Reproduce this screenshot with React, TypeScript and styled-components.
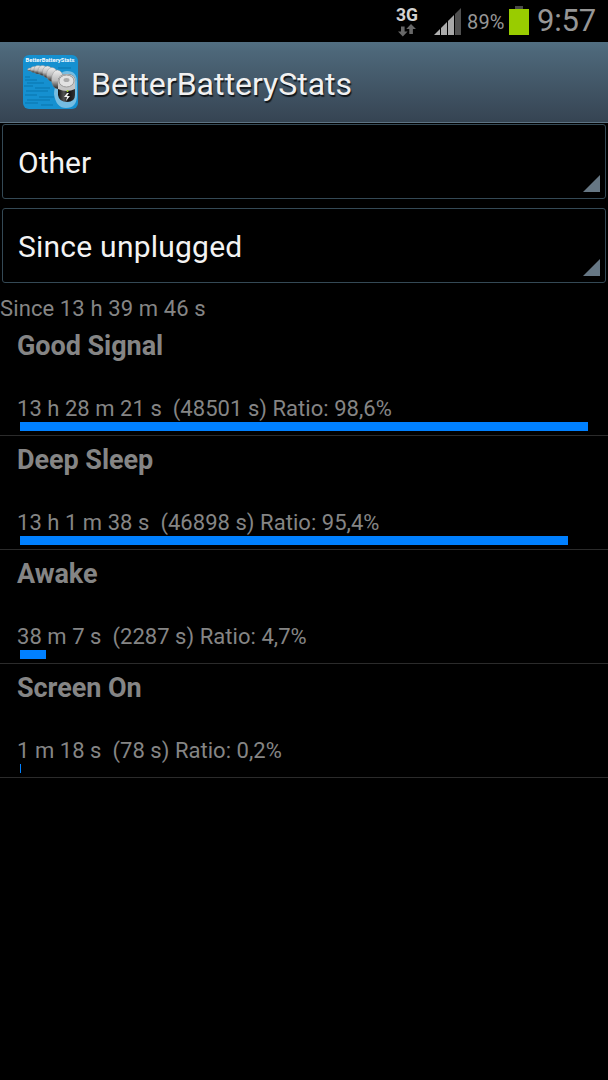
import React from 'react';
import styled, { createGlobalStyle } from 'styled-components';

const GlobalStyle = createGlobalStyle`
  * { box-sizing: border-box; }
  body { margin: 0; background: #000; font-family: Roboto, "Liberation Sans", sans-serif; }
`;

const Screen = styled.main`
  display: flex;
  flex-direction: column;
  width: 608px;
  height: 1080px;
  background: #000;
  overflow: hidden;
`;

const StatusBar = styled.header`
  display: flex;
  align-items: flex-start;
  justify-content: flex-end;
  height: 42px;
  padding-right: 13px;
  color: #969696;
`;

const Network = styled.div`
  display: flex;
  flex-direction: column;
  align-items: center;
  width: 24px;
  margin: 6px 15px 0 0;
`;

const NetworkType = styled.span`
  font-size: 17.5px;
  line-height: 18px;
  font-weight: 700;
  color: #d2d2d2;
`;

const StatusIcon = styled.svg`
  display: block;
  flex: none;
`;

const BatteryPercent = styled.span`
  width: 47px;
  padding-left: 5px;
  font-size: 20px;
  line-height: 44px;
  letter-spacing: 0.15px;
  white-space: nowrap;
`;

const Clock = styled.span`
  width: 58px;
  margin-left: 8px;
  font-size: 31px;
  line-height: 42px;
  letter-spacing: -0.2px;
  white-space: nowrap;
`;

const ActionBar = styled.div`
  display: flex;
  align-items: center;
  height: 81px;
  padding-left: 23px;
  background: linear-gradient(#526f82 0, #4d6779 12%, #384756 92%, #354452 100%);
  border-bottom: 1px solid #5d7383;
`;

const Title = styled.h1`
  margin: 0 0 0 13px;
  padding-top: 3px;
  font-size: 32px;
  font-weight: 400;
  line-height: 42px;
  color: #f1f1f1;
  text-shadow: 1px 2px 1px rgba(0, 0, 0, 0.75);
`;

const Filters = styled.div`
  display: flex;
  flex-direction: column;
  gap: 9px;
  padding: 1px 2px 0;
`;

const Spinner = styled.div`
  display: flex;
  align-items: center;
  justify-content: space-between;
  height: 75px;
  padding: 2px 5px 0 15px;
  border: 1px solid #344955;
  border-radius: 3px;
  font-size: 30px;
  color: #f3f3f3;
`;

const SpinnerLabel = styled.span<{ $tracking: number }>`
  letter-spacing: ${(p) => p.$tracking}px;
`;

const SpinnerArrow = styled.svg`
  align-self: flex-end;
  margin-bottom: 6px;
`;

const Period = styled.p`
  margin: 13px 0 0;
  font-size: 22px;
  line-height: 26px;
  letter-spacing: 0.11px;
  color: #858585;
`;

const Row = styled.section`
  height: 114px;
  padding: 6px 20px 0 17px;
  border-bottom: 1px solid #2b2b2b;
  color: #858585;
`;

const RowTitle = styled.h2`
  margin: 0;
  font-size: 27px;
  font-weight: 700;
  line-height: 36px;
  letter-spacing: -0.05px;
`;

const RowDetail = styled.p`
  margin: 32px 0 0;
  font-size: 22px;
  line-height: 26px;
  letter-spacing: 0.04px;
  white-space: pre;
`;

const Track = styled.div`
  width: 576px;
  height: 9px;
  margin-left: 3px;
`;

const Bar = styled.div`
  height: 100%;
  background: #0080ff;
`;

const stats = [
  { name: 'Good Signal', detail: '13 h 28 m 21 s  (48501 s) Ratio: 98,6%', ratio: 98.6 },
  { name: 'Deep Sleep', detail: '13 h 1 m 38 s  (46898 s) Ratio: 95,4%', ratio: 95.2 },
  { name: 'Awake', detail: '38 m 7 s  (2287 s) Ratio: 4,7%', ratio: 4.6 },
  { name: 'Screen On', detail: '1 m 18 s  (78 s) Ratio: 0,2%', ratio: 0.16 },
];

function DataArrows() {
  return (
    <StatusIcon width="18" height="13" viewBox="0 0 18 13">
      <path d="M3 2.5h3.6v5h3L4.8 12.4 0 7.5h3z" fill="#686868" />
      <path d="M13 0 18 4.9h-3.1v5h-3.6v-5h-3z" fill="#686868" />
    </StatusIcon>
  );
}

function Signal() {
  return (
    <StatusIcon width="28" height="36" viewBox="0 0 28 36">
      <path d="M0 35 6 29v6z" fill="#b0b0b0" />
      <path d="M7 28l6-6v13H7z" fill="#aaa" />
      <path d="M14 21l6-6v20h-6z" fill="#a8a8a8" />
      <path d="M21 14l6-6v27h-6z" fill="#505050" />
    </StatusIcon>
  );
}

function Battery() {
  return (
    <StatusIcon width="20" height="36" viewBox="0 0 20 36">
      <rect x="6" y="6" width="8" height="4" fill="#484848" />
      <rect y="9" width="20" height="26" fill="#99cc00" />
    </StatusIcon>
  );
}

function AppIcon() {
  return (
    <svg width="55" height="54" viewBox="0 0 55 54" overflow="visible">
      <defs>
        <linearGradient id="metal" x1="0" y1="0" x2="0" y2="1">
          <stop offset="0" stopColor="#eee" />
          <stop offset="0.55" stopColor="#bbb" />
          <stop offset="1" stopColor="#222" />
        </linearGradient>
        <linearGradient id="cell" x1="0" y1="0" x2="1" y2="0">
          <stop offset="0" stopColor="#111" />
          <stop offset="0.35" stopColor="#555" />
          <stop offset="0.6" stopColor="#111" />
          <stop offset="1" stopColor="#333" />
        </linearGradient>
      </defs>
      <rect width="55" height="54" rx="6" fill="#1590d0" />
      <path d="M2 25h12M4 28h17M1 31h9M12 33h15M3 36h22M2 40h12M16 42h15M4 45h23M2 48h13M18 50h12M2 22h5M35 13h13" stroke="#0874ad" strokeWidth="1" />
      <path d="M31 39q0-6 3-10 2-13 10-13 10 0 10 11v13q0 13-11 13-10 0-12-14z" fill="#75bde2" />
      <g fill="url(#metal)" stroke="#888" strokeWidth=".4">
        <ellipse cx="7" cy="14.5" rx="2.5" ry="1.5" />
        <ellipse cx="11" cy="14.5" rx="3.5" ry="3" />
        <ellipse cx="15" cy="14.8" rx="4" ry="4.2" />
        <ellipse cx="19.5" cy="15.5" rx="4.5" ry="5" />
        <ellipse cx="24.5" cy="17" rx="5" ry="6" />
        <ellipse cx="29" cy="19.5" rx="5.5" ry="7" />
        <ellipse cx="34.5" cy="24.5" rx="6" ry="9.5" />
      </g>
      <path d="M35 27q0-8 9-8t8 8v13q0 7-8 7t-9-7z" fill="url(#cell)" />
      <path d="M35 27q0-8 9-8t8 8v7q-8 4-17 0z" fill="#c5c5c5" />
      <ellipse cx="43.5" cy="26" rx="7.5" ry="6" fill="#e2e2e2" stroke="#999" strokeWidth="1" />
      <ellipse cx="43.5" cy="25" rx="3" ry="2" fill="#aaa" />
      <circle cx="44.5" cy="36" r="1" fill="#a6d22b" />
      <path d="M44 38l-3 4h3l-1 4 4-5h-3l2-3z" fill="#eee" />
      <text x="2.5" y="7" textLength="49" lengthAdjust="spacingAndGlyphs" fontFamily="Roboto, sans-serif" fontSize="6" fontWeight="700" fill="#f5fbff">BetterBatteryStats</text>
    </svg>
  );
}

function Picker({ label, tracking = 0 }: { label: string; tracking?: number }) {
  return (
    <Spinner>
      <SpinnerLabel $tracking={tracking}>{label}</SpinnerLabel>
      <SpinnerArrow width="17" height="17" viewBox="0 0 17 17">
        <path d="M17 0v17H0z" fill="#667784" />
      </SpinnerArrow>
    </Spinner>
  );
}

export default function App() {
  return (
    <Screen>
      <GlobalStyle />
      <StatusBar>
        <Network>
          <NetworkType>3G</NetworkType>
          <DataArrows />
        </Network>
        <Signal />
        <BatteryPercent>89%</BatteryPercent>
        <Battery />
        <Clock>9:57</Clock>
      </StatusBar>
      <ActionBar>
        <AppIcon />
        <Title>BetterBatteryStats</Title>
      </ActionBar>
      <Filters>
        <Picker label="Other" />
        <Picker label="Since unplugged" tracking={0.23} />
      </Filters>
      <Period>Since 13 h 39 m 46 s</Period>
      {stats.map((stat) => (
        <Row key={stat.name}>
          <RowTitle>{stat.name}</RowTitle>
          <RowDetail>{stat.detail}</RowDetail>
          <Track>
            <Bar style={{ width: `${stat.ratio}%` }} />
          </Track>
        </Row>
      ))}
    </Screen>
  );
}
